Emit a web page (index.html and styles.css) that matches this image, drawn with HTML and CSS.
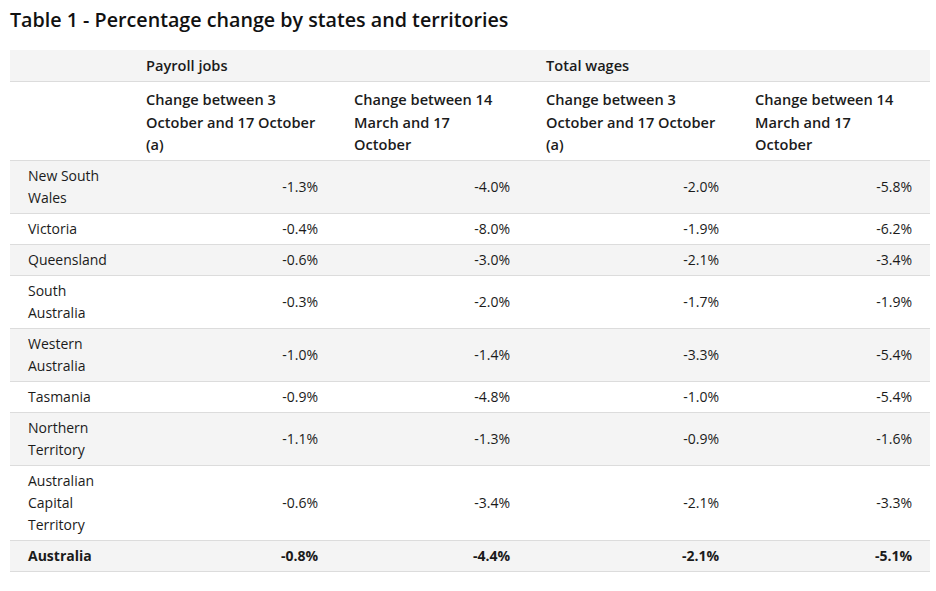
FILE: index.html
```html
<!DOCTYPE html>
<html lang="en">
<head>
<meta charset="utf-8">
<link rel="stylesheet" href="styles.css">
</head>
<body>
<h2 class="title">Table 1 - Percentage change by states and territories</h2>
<table class="data">
  <colgroup>
    <col class="c1"><col class="c2"><col class="c3"><col class="c4"><col class="c5">
  </colgroup>
  <thead>
    <tr class="grey top">
      <th></th>
      <th colspan="2">Payroll jobs</th>
      <th colspan="2">Total wages</th>
    </tr>
    <tr class="sub">
      <th></th>
      <th>Change between 3 October and 17 October (a)</th>
      <th>Change between 14 March and 17 October</th>
      <th>Change between 3 October and 17 October (a)</th>
      <th class="narrow">Change between 14 March and 17 October</th>
    </tr>
  </thead>
  <tbody>
    <tr class="grey"><td class="name">New South Wales</td><td>-1.3%</td><td>-4.0%</td><td>-2.0%</td><td>-5.8%</td></tr>
    <tr><td class="name">Victoria</td><td>-0.4%</td><td>-8.0%</td><td>-1.9%</td><td>-6.2%</td></tr>
    <tr class="grey"><td class="name">Queensland</td><td>-0.6%</td><td>-3.0%</td><td>-2.1%</td><td>-3.4%</td></tr>
    <tr><td class="name">South Australia</td><td>-0.3%</td><td>-2.0%</td><td>-1.7%</td><td>-1.9%</td></tr>
    <tr class="grey"><td class="name">Western Australia</td><td>-1.0%</td><td>-1.4%</td><td>-3.3%</td><td>-5.4%</td></tr>
    <tr><td class="name">Tasmania</td><td>-0.9%</td><td>-4.8%</td><td>-1.0%</td><td>-5.4%</td></tr>
    <tr class="grey"><td class="name">Northern Territory</td><td>-1.1%</td><td>-1.3%</td><td>-0.9%</td><td>-1.6%</td></tr>
    <tr><td class="name">Australian Capital Territory</td><td>-0.6%</td><td>-3.4%</td><td>-2.1%</td><td>-3.3%</td></tr>
    <tr class="grey total"><td class="name">Australia</td><td>-0.8%</td><td>-4.4%</td><td>-2.1%</td><td>-5.1%</td></tr>
  </tbody>
</table>
</body>
</html>
```
FILE: styles.css
```css
html, body {
  margin: 0;
  padding: 0;
  background: #fff;
}
body {
  padding: 0 6px 0 10px;
  font-family: "Open Sans", "Noto Sans", sans-serif;
  color: #1b1b1b;
  font-size: 14px;
}
.title {
  margin: 7px 0 0 0;
  font-size: 19.7px;
  line-height: 26px;
  font-weight: 600;
  color: #111;
  height: 43px;
}
.data {
  border-collapse: collapse;
  width: 920px;
  table-layout: fixed;
}
.c1 { width: 118px; }
.c2 { width: 208px; }
.c3 { width: 192px; }
.c4 { width: 209px; }
.c5 { width: 193px; }
.data th, .data td {
  padding: 4px 18px;
  line-height: 22px;
  border-bottom: 1px solid #dcdcdc;
}
.data th {
  text-align: left;
  font-weight: 600;
  font-size: 14.6px;
  vertical-align: top;
}
.data tr.top th {
  line-height: 23px;
}
.data tr.sub th {
  padding-top: 6px;
  padding-bottom: 4px;
  line-height: 22.5px;
}
.data tr.sub th.narrow {
  padding-right: 24px;
}
.data td {
  text-align: right;
  font-weight: 400;
  vertical-align: middle;
}
.data td.name {
  text-align: left;
}
.grey {
  background: #f4f4f4;
}
.total td {
  font-weight: 700;
}
```
